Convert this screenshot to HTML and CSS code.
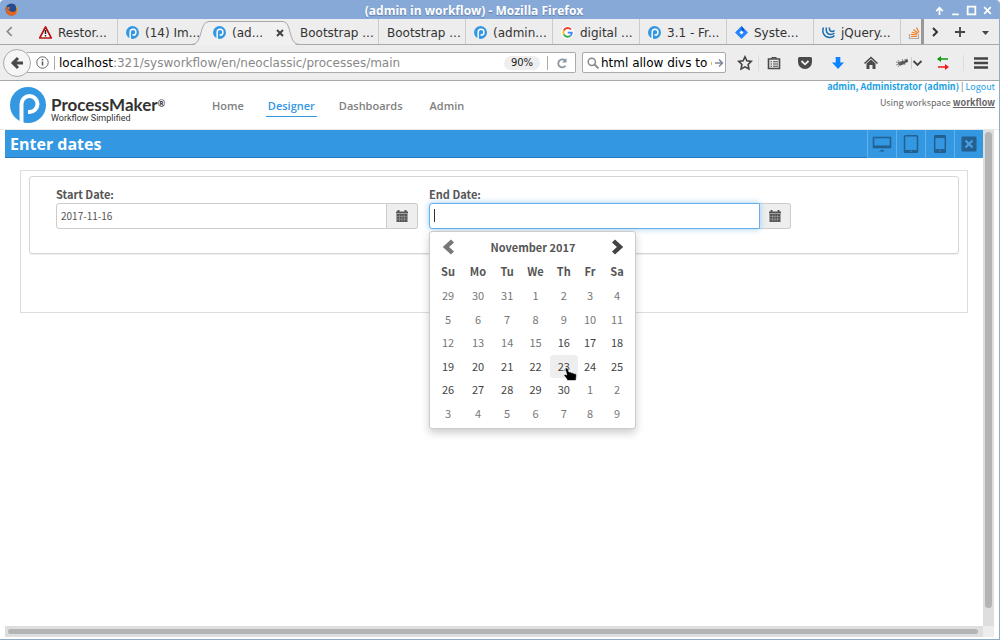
FILE: index.html
```html
<!DOCTYPE html>
<html lang="en">
<head>
<meta charset="utf-8">
<title>(admin in workflow) - Mozilla Firefox</title>
<link rel="stylesheet" href="styles.css">
</head>
<body>
<svg class="defs" width="0" height="0" aria-hidden="true">
  <symbol id="pm" viewBox="0 0 36 36"><circle cx="18" cy="18" r="18" fill="#3397e1"/><path d="M11.500 36V17a8 8 0 1 1 8 8H18" fill="none" stroke="#fff" stroke-width="4"/></symbol>
  <symbol id="cal" viewBox="0 0 12 12"><path d="M0 1.500h12v2H0zM1.500 0h2v2h-2zM8.500 0h2v2h-2zM.5 4h11v8H.5z" fill="#555"/><path d="M.5 6.500h11M.5 9.200h11M3.500 4.500v7M6 4.500v7M8.500 4.500v7" stroke="#aaa" stroke-width=".5"/></symbol>
  <symbol id="chev" viewBox="0 0 12 16"><path d="M10.500 2 4 8l6.500 6" fill="none" stroke="currentColor" stroke-width="4.400"/></symbol>
</svg>
<div class="window">
  <header class="titlebar">
    <svg class="firefox" viewBox="0 0 13 13"><circle cx="6.500" cy="6.500" r="6" fill="#234c92"/><path d="M1 3C0 8 2 12.500 6.500 12.800c4.500 0 7-4 6-8.300-1 3-3 5-5.500 4.500C4 8.500 3 6 1 3z" fill="#e8631a"/><path d="M10 1.500c3 2 3.500 6 1.500 9 .5-3 .3-6-1.500-9z" fill="#ffc332"/><path d="M2 4l3 .5-1 1.500 1.500 2.500z" fill="#f08b25"/></svg>
    <h1 class="window-title">(admin in workflow) - Mozilla Firefox</h1>
    <div class="window-buttons">
      <button aria-label="Shade"><svg viewBox="0 0 10 10"><path d="M5 9V3M2 5.500l3-3 3 3" /></svg></button>
      <button aria-label="Minimize"><svg viewBox="0 0 10 10"><path d="M2 8.500h6"/></svg></button>
      <button aria-label="Maximize"><svg viewBox="0 0 10 10"><path d="M1.500 1.500h7v7h-7z"/></svg></button>
      <button aria-label="Close"><svg viewBox="0 0 10 10"><path d="M2 2l6 6M8 2 2 8"/></svg></button>
    </div>
  </header>

  <nav class="tabs" aria-label="Tabs">
    <button class="tab-scroll" aria-label="Previous tabs"><svg viewBox="0 0 8 10"><path d="M6 1 2 5l4 4" fill="none" stroke="#888" stroke-width="1.500"/></svg></button>
    <button class="tab"><svg class="fav" viewBox="0 0 13 13"><path d="M6.500 1 12.300 12H.7z" fill="#fff" stroke="#b81414" stroke-width="1.700" stroke-linejoin="round"/><path d="M6.500 4v4M6.500 9v1.500" stroke="#222" stroke-width="1.500"/></svg>Restor...</button>
    <button class="tab before-active"><svg class="fav"><use href="#pm"/></svg>(14) Im...</button>
    <button class="tab active"><svg class="tab-shape" viewBox="0 0 107 25" preserveAspectRatio="none"><path d="M0 25h1C11 25 7 1 17 1h74c9 0 5 24 15 24z" fill="#f0f0f0"/><path d="M0 24.500C11 24.500 7 1.500 17 1.500h74c9 0 5 23 16 23" fill="none" stroke="#a9a9a9"/></svg><svg class="fav"><use href="#pm"/></svg><span>(ad...</span><svg class="tab-close" viewBox="0 0 8 8"><path d="m1 1 6 6M7 1 1 7" stroke="#444" stroke-width="2"/></svg></button>
    <button class="tab">Bootstrap ...</button>
    <button class="tab">Bootstrap ...</button>
    <button class="tab"><svg class="fav"><use href="#pm"/></svg>(admin...</button>
    <button class="tab"><svg class="fav" viewBox="0 0 13 13"><circle cx="6.500" cy="6.500" r="6.500" fill="#fff"/><g fill="none" stroke-width="1.900"><path d="M10 3.500A4.300 4.300 0 0 0 2.800 4.500" stroke="#ea4335"/><path d="M2.800 4.500a4.300 4.300 0 0 0 0 4" stroke="#fbbc05"/><path d="M2.800 8.500A4.300 4.300 0 0 0 9.600 9.600" stroke="#34a853"/><path d="M9.600 9.600a4.300 4.300 0 0 0 1.200-3H6.700" stroke="#4285f4"/></g></svg>digital ...</button>
    <button class="tab"><svg class="fav"><use href="#pm"/></svg>3.1 - Fr...</button>
    <button class="tab"><svg class="fav" viewBox="0 0 13 13"><path d="M6.500 0 13 6.500 6.500 13 0 6.500z" fill="#2684ff"/><path d="m6.500 0 3 4-3 1.500z" fill="#0052cc"/><path d="m6.500 4.500 2 2-2 2-2-2z" fill="#fff"/></svg>Syste...</button>
    <button class="tab"><svg class="fav" viewBox="0 0 13 13"><g fill="none" stroke="#1b6fb0" stroke-width="1.500"><path d="M1.500 1.500c-2 5 1 10 6 10 2 0 4-.7 5-2"/><path d="M4.500 1.500c-1 4 1 7 4 7 1.500 0 3-.5 4-1.500"/><path d="M7.500 1.500c-.5 2.500 1 4 2.500 4 1 0 2-.3 2.500-1"/></g></svg>jQuery...</button>
    <button class="tab last" aria-label="Stack Overflow"><svg class="fav" viewBox="0 0 13 13"><path d="M1.500 8v4.500h9V8" fill="none" stroke="#aaa" stroke-width="1.200"/><path d="M3 10.500h6M3 8.300l6 .7M3.700 6l5.500 2M5.500 3.500l4.500 3.800M8.500 1.500l2.500 5" stroke="#f48024" stroke-width="1.200"/></svg></button>
    <div class="tab-tools">
      <button aria-label="More tabs"><svg viewBox="0 0 12 12"><path d="m4 2 4 4-4 4" fill="none" stroke="#333" stroke-width="2"/></svg></button>
      <button aria-label="New tab"><svg viewBox="0 0 12 12"><path d="M6 1v10M1 6h10" stroke="#444" stroke-width="1.800"/></svg></button>
      <button aria-label="List all tabs"><svg viewBox="0 0 12 12"><path d="M3 5h7L6.500 9z" fill="#444"/></svg></button>
    </div>
  </nav>

  <div class="toolbar">
    <button class="back" aria-label="Back"><svg viewBox="0 0 14 14"><path d="M13 7H3M8 2 3 7l5 5" fill="none" stroke="#484848" stroke-width="3"/></svg></button>
    <div class="urlbar">
      <svg class="info" viewBox="0 0 13 13"><circle cx="6.500" cy="6.500" r="5.700" fill="none" stroke="#666"/><path d="M6.500 5.500v4M6.500 3v1.500" stroke="#555" stroke-width="1.500"/></svg>
      <span class="url"><b>localhost</b>:321/sysworkflow/en/neoclassic/processes/main</span>
      <button class="zoom">90%</button>
      <button class="reload" aria-label="Reload"><svg viewBox="0 0 12 12"><path d="M9.500 8.800A4 4 0 1 1 9 3.500" fill="none" stroke="#8b96a3" stroke-width="1.800"/><path d="M10.500 1v4.500H6z" fill="#8b96a3"/></svg></button>
    </div>
    <div class="search">
      <svg viewBox="0 0 12 12"><circle cx="4.800" cy="4.800" r="3.600" fill="none" stroke="#888" stroke-width="1.500"/><path d="m7.500 7.500 4 4" stroke="#888" stroke-width="1.800"/></svg>
      <input type="text" aria-label="Search" value="html allow divs to change">
      <button aria-label="Go"><svg viewBox="0 0 10 10"><path d="M1 5h7M5 1.500 8.500 5 5 8.500" fill="none" stroke="#7e8b98" stroke-width="1.500"/></svg></button>
    </div>
    <div class="tools">
      <button class="t-star" aria-label="Bookmark"><svg viewBox="0 0 16 16"><path d="m8 1.800 1.900 4 4.400.6-3.200 3.100.8 4.400L8 11.800l-3.900 2.100.8-4.400L1.700 6.400l4.400-.6z" fill="none" stroke="#444" stroke-width="1.600"/></svg></button>
      <button class="t-list" aria-label="Bookmarks list"><svg viewBox="0 0 16 16"><path d="M2.500 4h11v9.500h-11z" fill="none" stroke="#4a4a4a" stroke-width="1.600"/><path d="M6 4V2.500h4V4M4.500 6.700H6M4.500 9H6M4.500 11.200H6M7 6.700h5M7 9h5M7 11.200h5" fill="none" stroke="#4a4a4a" stroke-width="1.100"/></svg></button>
      <button aria-label="Pocket"><svg viewBox="0 0 16 16"><path d="M2.500 2h11A1.500 1.500 0 0 1 15 3.500V7A7 7 0 0 1 1 7V3.500A1.500 1.500 0 0 1 2.500 2z" fill="#4a4a4a"/><path d="m4.500 6 3.500 3.300L11.500 6" fill="none" stroke="#eee" stroke-width="1.800"/></svg></button>
      <button aria-label="Downloads"><svg viewBox="0 0 16 16"><path d="M5.700 2h4.600v5.500H14L8 14 2 7.500h3.700z" fill="#0a84ff"/></svg></button>
      <button aria-label="Home"><svg viewBox="0 0 16 16"><path d="m1.500 8.500 6.500-6 6.500 6" fill="none" stroke="#4a4a4a" stroke-width="1.600"/><path d="M3.500 8.500 8 4.500l4.500 4V14h-3v-4h-3v4h-3z" fill="#4a4a4a"/></svg></button>
      <button class="t-bug" aria-label="Firebug"><svg viewBox="0 0 28 16"><ellipse cx="7" cy="8" rx="4" ry="1.800" fill="#555" transform="rotate(-15 7 8)"/><circle cx="11.500" cy="6" r="1.500" fill="#444"/><path d="m3 5 3 6M7 4l3 6M1 10l10-4M3 12l3-4M9 5l4-1M1 7l4 1" stroke="#666" stroke-width=".7"/><path d="m18.500 6 4 4 4-4" fill="none" stroke="#444" stroke-width="1.800"/><path d="M16.500 2v12" stroke="#ccc"/></svg></button>
      <button class="t-swap" aria-label="Proxy"><svg viewBox="0 0 16 16"><path d="M3 4h10" stroke="#0b9a0b" stroke-width="1.700"/><path d="M2 4l4-3v6z" fill="#0b9a0b"/><path d="M3 12h8" stroke="#f01818" stroke-width="1.700"/><path d="m14 12-4-3v6z" fill="#f01818"/></svg></button>
      <button class="t-menu" aria-label="Menu"><svg viewBox="0 0 16 16"><path d="M1 3.500h14M1 8h14M1 12.500h14" stroke="#444" stroke-width="2.500"/></svg></button>
    </div>
  </div>

  <div class="site-header">
    <a class="logo" href="#" aria-label="ProcessMaker"><svg class="logo-mark"><use href="#pm"/></svg><span class="logo-text"><strong>ProcessMaker<sup>®</sup></strong><small>Workflow Simplified</small></span></a>
    <nav class="menu"><a href="#">Home</a><a class="current" href="#">Designer</a><a href="#">Dashboards</a><a href="#">Admin</a></nav>
    <div class="account"><p><a class="user" href="#">admin, Administrator (admin)</a> | <a class="logout" href="#">Logout</a></p><p class="space">Using workspace <a href="#">workflow</a></p></div>
  </div>

  <main class="frame">
    <div class="content">
      <div class="formbar">
        <h2>Enter dates</h2>
        <button aria-label="Desktop"><svg viewBox="0 0 20 20"><path d="M1.500 3.500h17v10h-17z" fill="none" stroke="#235f8f" stroke-width="1.500"/><path d="M1.500 11.500h17v2.500h-17zM7 17.500l3-2 3 2z" fill="#235f8f"/></svg></button>
        <button aria-label="Tablet"><svg viewBox="0 0 20 20"><rect x="3.500" y="1.700" width="13" height="16.500" rx="1" fill="none" stroke="#235f8f" stroke-width="1.500"/><path d="M3 16h14v2.500H3z" fill="#235f8f"/><circle cx="10" cy="17.200" r=".8" fill="#3397e1"/></svg></button>
        <button aria-label="Phone"><svg viewBox="0 0 20 20"><rect x="4.700" y="1.700" width="10.600" height="16.500" rx="1" fill="none" stroke="#235f8f" stroke-width="1.500"/><path d="M4.500 1.500h11V4h-11zM4.500 15h11v3.500h-11z" fill="#235f8f"/><circle cx="10" cy="16.700" r=".8" fill="#3397e1"/></svg></button>
        <button aria-label="Close preview"><svg viewBox="0 0 20 20"><rect x="2.500" y="2.500" width="15" height="15" rx="1" fill="#235f8f"/><path d="m6.500 6.500 7 7M13.500 6.500l-7 7" stroke="#49a0e2" stroke-width="2.200"/></svg></button>
      </div>
      <form class="form">
        <div class="panel">
          <div class="field">
            <label for="start">Start Date:</label>
            <div class="group"><input id="start" type="text" value="2017-11-16"><button type="button" aria-label="Pick start date"><svg><use href="#cal"/></svg></button></div>
          </div>
          <div class="field">
            <label for="end">End Date:</label>
            <div class="group focus"><input id="end" type="text"><i class="caret"></i><button type="button" aria-label="Pick end date"><svg><use href="#cal"/></svg></button></div>
            <div class="picker">
              <div class="picker-head"><button type="button" class="prev" aria-label="Previous month"><svg><use href="#chev"/></svg></button><strong>November 2017</strong><button type="button" class="next" aria-label="Next month"><svg><use href="#chev"/></svg></button></div>
              <table>
                <colgroup><col class="wide"><col class="wide"><col><col><col><col class="narrow"><col class="wide"></colgroup>
                <thead><tr><th>Su</th><th>Mo</th><th>Tu</th><th>We</th><th>Th</th><th>Fr</th><th>Sa</th></tr></thead>
                <tbody>
                  <tr class="off"><td>29</td><td>30</td><td>31</td><td>1</td><td>2</td><td>3</td><td>4</td></tr>
                  <tr class="off"><td>5</td><td>6</td><td>7</td><td>8</td><td>9</td><td>10</td><td>11</td></tr>
                  <tr><td class="off">12</td><td class="off">13</td><td class="off">14</td><td class="off">15</td><td>16</td><td>17</td><td>18</td></tr>
                  <tr><td>19</td><td>20</td><td>21</td><td>22</td><td class="hover">23<svg class="pointer" viewBox="0 0 13 14"><path d="M1 1h2.500l1.500 4h1.500l1 .8h1.500l1 .8h1.500l1 1.500-.5 5.400H3.500L2 11 0 8.500l1-1.300 1.800.8z" fill="#000" stroke="#fff" stroke-width=".6"/></svg></td><td>24</td><td>25</td></tr>
                  <tr><td>26</td><td>27</td><td>28</td><td>29</td><td>30</td><td class="off">1</td><td class="off">2</td></tr>
                  <tr class="off"><td>3</td><td>4</td><td>5</td><td>6</td><td>7</td><td>8</td><td>9</td></tr>
                </tbody>
              </table>
            </div>
          </div>
        </div>
      </form>
    </div>
    <div class="vscroll"><i></i></div>
    <div class="hscroll"><i></i></div>
    <div class="corner"></div>
  </main>
</div>
</body>
</html>
```
FILE: styles.css
```css
* { box-sizing: border-box; }
body { margin: 0; background: #fff; font: 12px "DejaVu Sans", sans-serif; color: #333; }
button { border: 0; padding: 0; background: none; font: inherit; color: inherit; display: flex; align-items: center; justify-content: center; flex: none; }
a { color: inherit; text-decoration: none; }
p, h1, h2 { margin: 0; }
svg { display: block; flex: none; }
.defs { position: absolute; }
.window { min-height: 100vh; display: flex; flex-direction: column; border-right: 1px solid #8fabcb; border-bottom: 1px solid #8fabcb; border-radius: 4px 4px 0 0; overflow: hidden; }

.titlebar { height: 19px; display: flex; align-items: center; background: #87a9d8; padding: 0 6px 0 5px; }
.firefox { width: 13px; height: 13px; }
.window-title { flex: 1; padding: 3px 4px 0 0; text-align: center; font: bold 12px/16px "Open Sans", sans-serif; color: #fff; text-shadow: 0 1px 1px #5c7ba8; }
.window-buttons { display: flex; gap: 5px; padding-top: 2px; }
.window-buttons svg { width: 11px; height: 11px; fill: none; stroke: #fff; stroke-width: 1.6; }

.tabs { height: 26px; display: flex; background: #ededed; border-bottom: 1px solid #a9a9a9; }
.tab-scroll { width: 18px; margin-right: 13px; }
.tab-scroll svg { width: 9px; height: 11px; }
.tab { flex: 0 1 87px; min-width: 0; justify-content: flex-start; gap: 6px; padding: 2px 0 0 8px; overflow: hidden; white-space: nowrap; position: relative; border-right: 1px solid #ccc; }
.tab.before-active { border-color: transparent; }
.fav { width: 13px; height: 13px; }
.tab.active { overflow: visible; border: 0; }
.tab.active span { position: relative; flex: 1; text-align: left; }
.tab.active .fav { position: relative; }
.tab-shape { position: absolute; left: -13px; top: 1px; width: 107px; height: 25px; }
.tab-close { width: 8px; height: 8px; position: relative; margin-right: 8px; }
.tab.last { flex: 0 0 23px; padding-left: 7px; border-right: 3px solid #999; }
.tab-tools { margin-left: auto; display: flex; gap: 13px; padding-right: 8px; }
.tab-tools button { width: 12px; }
.tab-tools svg { width: 12px; height: 12px; }

.toolbar { height: 36px; display: flex; align-items: center; background: #ededed; border-bottom: 1px solid #a9a9a9; padding: 0 10px 0 3px; }
.back { width: 28px; height: 28px; border: 1px solid #aaa; border-radius: 50%; background: #f6f6f6; z-index: 1; }
.back svg { width: 14px; height: 14px; }
.urlbar { flex: 1; height: 21px; margin-left: -4px; margin-right: 6px; display: flex; align-items: center; background: #fff; border: 1px solid #aaa; border-left: 0; border-radius: 0 2px 2px 0; padding-left: 9px; }
.info { width: 13px; height: 13px; }
.url { flex: 1; margin-left: 5px; padding-left: 4px; border-left: 1px solid #aaa; line-height: 14px; color: #888; white-space: nowrap; }
.url b { font-weight: normal; color: #000; }
.zoom { width: 36px; height: 14px; border-radius: 7px; background: #eee; font-size: 10px; color: #222; }
.reload { width: 28px; height: 14px; margin-left: 7px; border-left: 1px solid #aaa; }
.reload svg { width: 12px; height: 12px; }
.search { width: 144px; height: 21px; display: flex; align-items: center; gap: 2px; padding: 0 1px 0 4px; background: #fff; border: 1px solid #aaa; border-radius: 2px; }
.search svg { width: 12px; height: 12px; }
.search button svg { width: 10px; height: 10px; }
.search input { flex: 1; min-width: 0; border: 0; padding: 0; font: inherit; color: #000; background: none; outline: 0; }
.tools { display: flex; align-items: center; padding-left: 11px; }
.tools button { width: 33px; }
.tools svg { width: 16px; height: 16px; }
.tools .t-star { width: 16px; }
.tools .t-list { width: 30px; margin-left: 5px; border-left: 1px solid #ddd; }
.tools .t-bug { width: 34px; margin-left: 5px; }
.tools .t-bug svg { width: 28px; }
.tools .t-swap { width: 16px; margin: 0 12px 0 9px; }
.tools .t-menu { width: 26px; justify-content: flex-end; border-left: 1px solid #ddd; }

.site-header { height: 49px; display: flex; padding: 0 4px 0 10px; border-bottom: 1px solid #e8e8e8; font-family: "Open Sans", sans-serif; }
.logo { width: 197px; display: flex; align-items: center; gap: 5px; }
.logo-mark { width: 36px; height: 36px; }
.logo-text { display: flex; flex-direction: column; padding-top: 10px; color: #333; font-family: Lato, sans-serif; }
.logo-text strong { font-size: 17px; line-height: 16px; white-space: nowrap; }
.logo-text sup { font-size: 9px; line-height: 0; vertical-align: 4px; }
.logo-text small { font: 9px/11px Roboto, sans-serif; }
.menu { flex: 1; display: flex; align-items: flex-start; gap: 17px; padding-top: 15px; font-size: 11px; line-height: 20px; font-weight: 600; color: #808080; }
.menu a { padding: 0 5px; border-bottom: 1px solid transparent; }
.menu .current { padding: 0 2px; color: #3397e1; border-color: #3397e1; }
.account { font: 9px/12px "Noto Sans CJK SC", sans-serif; text-align: right; color: #666; }
.account .user { color: #1ba1e2; font-weight: bold; }
.account .logout { color: #1ba1e2; }
.space { padding-top: 4px; }
.space a { font-weight: bold; text-decoration: underline; }

.frame { flex: 1; display: grid; grid-template: 1fr 11px / 1fr 11px; margin: 0 5px 2px; }
.content { min-width: 0; font-family: "Noto Sans CJK SC", sans-serif; font-size: 11px; color: #555; }
.formbar { display: flex; height: 28px; background: #3397e1; }
.formbar h2 { flex: 1; padding-left: 5px; border-bottom: 1px solid #2779bd; color: #fff; font: bold 16px/29px "Open Sans", sans-serif; }
.formbar button { width: 29px; border-left: 1px solid #65b1ea; }
.formbar svg { width: 20px; height: 20px; }
.form { margin: 12px 15px 0; height: 143px; padding: 5px 8px; border: 1px solid #ddd; }
.panel { height: 78px; display: grid; grid-template-columns: repeat(2, minmax(0, 373px)); padding: 9px 0 0 26px; border: 1px solid #d5d5d5; border-radius: 3px; box-shadow: 0 1px 1px #eee; }
.field { position: relative; margin-right: 11px; }
.field label { display: block; font-weight: bold; line-height: 17px; }
.group { display: flex; height: 26px; position: relative; }
.group input { flex: 1; min-width: 0; border: 1px solid #ccc; border-radius: 3px 0 0 3px; padding: 0 4px 2px; font: inherit; font-size: 10px; color: #555; outline: 0; }
.group button { width: 31px; border: 1px solid #ccc; border-left: 0; border-radius: 0 3px 3px 0; background: #eee; }
.group svg { width: 12px; height: 12px; }
.focus input { border-color: #66afe9; box-shadow: 0 0 6px #9cccf2; z-index: 1; }
.caret { position: absolute; left: 5px; top: 6px; width: 1px; height: 13px; background: #333; z-index: 2; }
.picker { position: absolute; left: 0; top: 45px; width: 207px; padding: 2px 3px 2px 3px; z-index: 2; background: #fff; border: 1px solid #ccc; border-radius: 3px; box-shadow: 0 4px 9px rgba(0,0,0,.2); }
.picker-head { display: flex; justify-content: space-between; height: 25px; align-items: center; padding: 0 8px 0 9px; }
.picker-head strong { line-height: 20px; }
.picker-head button svg { width: 12px; height: 16px; color: #777; }
.picker-head .next svg { color: #444; transform: scaleX(-1); }
.picker table { table-layout: fixed; border-collapse: separate; border-spacing: 0 1px; width: 100%; text-align: center; }
.picker th, .picker td { padding: 0 0 2px; line-height: 18px; position: relative; }
.picker th { height: 24px; }
.picker td { height: 22px; color: #444; }
.picker tr:nth-child(even) td { height: 23px; }
.picker .off, .picker .off td { color: #777; }
.wide { width: 30px; }
.narrow { width: 24px; }
.picker .hover { background: #eee; border-radius: 3px; }
.pointer { position: absolute; left: 14px; top: 12px; width: 13px; height: 14px; }
.vscroll { padding: 2px; background: #dedede; display: flex; }
.vscroll i { flex: 1; margin-bottom: 16px; border-radius: 4px; background: #b3b4b6; }
.hscroll { padding: 3px; display: flex; background: #dedede; }
.hscroll i { flex: 1; margin-right: 2px; border-radius: 4px; background: #b3b4b6; }
.corner { background: #ededed; }
```
